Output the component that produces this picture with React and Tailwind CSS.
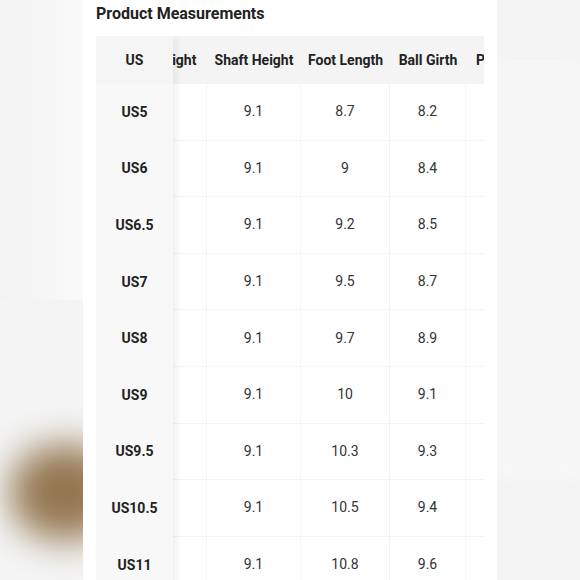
import React from "react";

const rows = [
  ["US5", "9.1", "8.7", "8.2"],
  ["US6", "9.1", "9", "8.4"],
  ["US6.5", "9.1", "9.2", "8.5"],
  ["US7", "9.1", "9.5", "8.7"],
  ["US8", "9.1", "9.7", "8.9"],
  ["US9", "9.1", "10", "9.1"],
  ["US9.5", "9.1", "10.3", "9.3"],
  ["US10.5", "9.1", "10.5", "9.4"],
  ["US11", "9.1", "10.8", "9.6"],
];

export default function App() {
  return (
    <div
      className="relative w-[580px] h-[580px] overflow-hidden bg-[#f4f4f4] flex"
      style={{ fontFamily: "Roboto, 'Liberation Sans', sans-serif" }}
    >
      {/* blurred background decoration */}
      <div className="absolute left-[0px] top-[0px] w-[83px] h-[300px] bg-gradient-to-r from-[#f2f2f2] to-[#fafafa]" />
      <div className="absolute left-[10px] top-[445px] w-[110px] h-[95px] rounded-full bg-[#8a6a40] blur-[18px] opacity-90" />
      <div className="absolute right-[0px] top-[60px] w-[83px] h-[420px] bg-[#f7f7f7] blur-[6px]" />

      <div className="relative ml-[83px] w-[414px] h-full shrink-0 bg-white flex flex-col pl-[13px]">
        <div className="h-[36px] shrink-0 pt-[3px] text-[16px] font-bold text-[#222] leading-[22px]">
          Product Measurements
        </div>
        <div className="flex shrink-0 w-[388px] overflow-hidden">
          {/* sticky column */}
          <div className="relative z-10 w-[77px] shrink-0 flex flex-col shadow-[5px_0_8px_-2px_rgba(0,0,0,0.07)]">
            <div className="h-[48px] shrink-0 flex items-center justify-center bg-[#f5f5f5] text-[14px] font-bold text-[#222]">
              US
            </div>
            {rows.map((r) => (
              <div
                key={r[0]}
                className="h-[56.6px] shrink-0 flex items-center justify-center bg-[#f8f8f8] text-[14px] font-bold text-[#222]"
              >
                {r[0]}
              </div>
            ))}
          </div>
          {/* scrolled columns */}
          <div className="flex-1 overflow-hidden">
            <div className="ml-[-61px] flex flex-col w-max">
              <div className="flex h-[48px] shrink-0 bg-[#f4f4f4] text-[14px] font-bold text-[#222]">
                <div className="w-[95px] flex items-center justify-center">Heel Height</div>
                <div className="w-[94px] flex items-center justify-center">Shaft Height</div>
                <div className="w-[89px] flex items-center justify-center">Foot Length</div>
                <div className="w-[76px] flex items-center justify-center">Ball Girth</div>
                <div className="w-[100px] flex items-center pl-[10px]">Price</div>
              </div>
              {rows.map((r) => (
                <div
                  key={r[0]}
                  className="flex h-[56.6px] shrink-0 border-b border-[#f4f4f4] text-[14px] text-[#333]"
                >
                  <div className="w-[95px] flex items-center justify-center border-r border-[#f4f4f4]"></div>
                  <div className="w-[94px] flex items-center justify-center border-r border-[#f6f6f6]">{r[1]}</div>
                  <div className="w-[89px] flex items-center justify-center border-r border-[#f2f2f2]">{r[2]}</div>
                  <div className="w-[76px] flex items-center justify-center border-r border-[#f6f6f6]">{r[3]}</div>
                  <div className="w-[100px] flex items-center pl-[10px]"></div>
                </div>
              ))}
            </div>
          </div>
        </div>
      </div>
    </div>
  );
}
